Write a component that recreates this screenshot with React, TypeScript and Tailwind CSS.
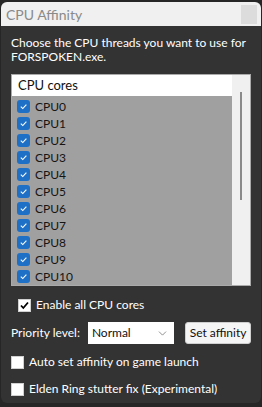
import { ChevronDown } from "lucide-react";

const cpus = Array.from({ length: 11 }, (_, i) => `CPU${i}`);

function BlueCheck() {
  return (
    <span className="flex h-[13px] w-[13px] items-center justify-center rounded-[3px] bg-[#1e6fc6]">
      <svg width="9" height="9" viewBox="0 0 10 10" fill="none">
        <path d="M2 5.2 4.2 7.3 8.2 2.8" stroke="#fff" strokeWidth="1.2" />
      </svg>
    </span>
  );
}

function Box({ checked }: { checked?: boolean }) {
  return (
    <span className="flex h-[13px] w-[13px] items-center justify-center border border-[#d0d0d0] bg-white">
      {checked && (
        <svg width="11" height="11" viewBox="0 0 11 11" fill="none">
          <path d="M2 5.5 4.3 8 9 2.5" stroke="#000" strokeWidth="1.8" />
        </svg>
      )}
    </span>
  );
}

export default function App() {
  return (
    <div className="h-[407px] w-[262px] bg-[#262626] pt-[2px] font-['Lato',sans-serif] text-[12px]">
      <div className="mx-px flex h-[401px] flex-col overflow-hidden rounded-[6px] bg-[#333333]">
        <div className="flex h-[24px] items-center justify-between bg-[#f0f0f0] pl-[5px] pr-[4px]">
          <span className="text-[14px] text-[#8a8a8a]">CPU Affinity</span>
          <span className="h-[19px] w-[16px] bg-[#dcdcdc]" />
        </div>

        <div className="flex flex-col px-[10px] pt-[10px]">
          <p className="leading-[14px] text-white">
            Choose the CPU threads you want to use for FORSPOKEN.exe.
          </p>

          <div className="mt-[10px] flex h-[212px] border border-[#aaaaaa] bg-[#f0f0f0]">
            <div className="flex flex-1 flex-col">
              <div className="flex h-[24px] items-center bg-white pl-[6px] text-[13px] text-[#111]">
                CPU cores
              </div>
              <div className="flex flex-1 flex-col bg-[#a0a0a0] pl-[5px] pt-[2px]">
                {cpus.map((c) => (
                  <div key={c} className="flex h-[17px] shrink-0 items-center gap-[5px] text-[#151515]">
                    <BlueCheck />
                    <span>{c}</span>
                  </div>
                ))}
              </div>
            </div>
            <div className="flex w-[18px] justify-center pt-[17px]">
              <div className="h-[108px] w-[2px] bg-[#8a8a8a]" />
            </div>
          </div>

          <label className="mt-[10px] flex items-center gap-[5px] pl-[7px] text-white">
            <Box checked />
            <span>Enable all CPU cores</span>
          </label>

          <div className="mt-[8px] flex items-center whitespace-nowrap">
            <span className="text-white">Priority level:</span>
            <div className="ml-[8px] flex h-[22px] w-[90px] items-center justify-between bg-white pl-[4px] pr-[5px] text-[#111]">
              <span>Normal</span>
              <ChevronDown size={13} strokeWidth={1.2} color="#555" />
            </div>
            <button className="ml-[11px] h-[22px] w-[69px] rounded-[3px] border border-[#cfcfcf] bg-[#f5f5f5] text-[12px] text-[#111]">
              Set affinity
            </button>
          </div>

          <label className="mt-[9px] flex items-center gap-[5px] text-white">
            <Box />
            <span>Auto set affinity on game launch</span>
          </label>
          <label className="mt-[9px] flex items-center gap-[5px] text-white">
            <Box />
            <span>Elden Ring stutter fix (Experimental)</span>
          </label>
        </div>
      </div>
    </div>
  );
}
